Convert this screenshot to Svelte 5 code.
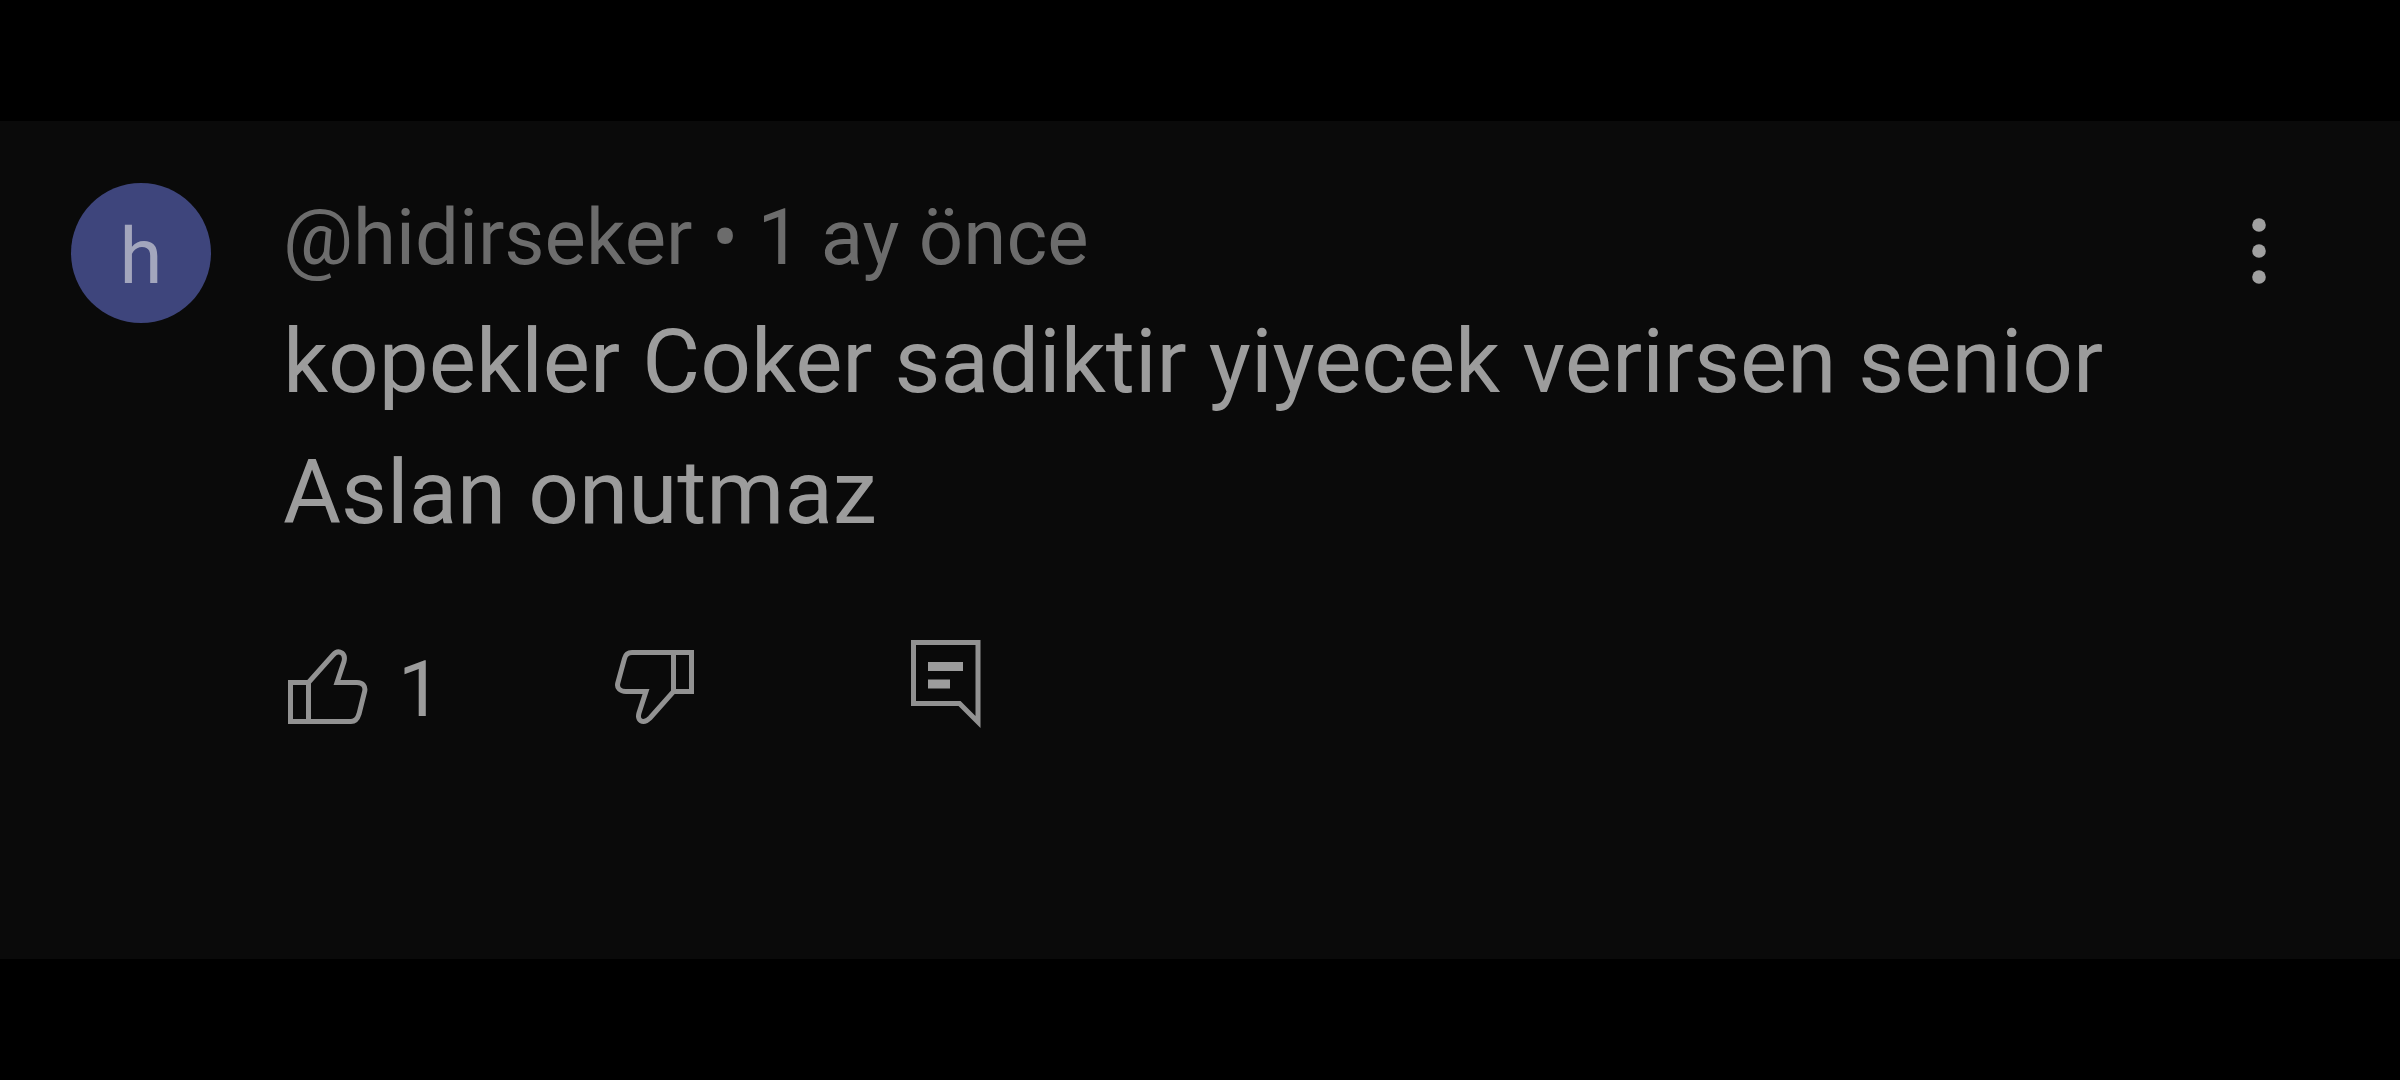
<script>
    let comment = {
        author: '@hidirseker',
        initial: 'h',
        age: '1 ay önce',
        text: 'kopekler Coker sadiktir yiyecek verirsen senior Aslan onutmaz',
    };
    let likes = 1;
</script>

<main class="page">
    <article class="comment">
        <a class="avatar" href="#channel">{comment.initial}</a>

        <div class="content">
            <header class="meta">
                <a class="author" href="#channel">{comment.author}</a> • {comment.age}
            </header>
            <p class="text">{comment.text}</p>

            <div class="actions">
                <button class="action" aria-label="Like">
                    <svg class="icon" viewBox="0 0 80 96">
                        <path d="M2.5 42.5H20.5L45 15C48 11.5 51 11 54 13C56.5 15 57 17.5 56 21.5L49 42.5H69C75 42.5 78 46.5 76.5 52L71 74C69.5 79 67 81.5 63 81.5H2.5ZM20.5 42.5V81.5" />
                    </svg>
                    <span class="count">{likes}</span>
                </button>
                <button class="action" aria-label="Dislike">
                    <svg class="icon" viewBox="0 0 80 96">
                        <path d="M76.5 12.5H17C13 12.5 10.5 14.5 9.5 18.5L2.8 43C1.5 48 5 51.5 11 51.5H31L24 73C22.5 78 24.5 81.5 28.5 81.5C31 81.5 33 80 35 78L58.5 51.5H76.5ZM58.5 12.5V51.5" />
                    </svg>
                </button>
                <button class="action" aria-label="Reply">
                    <svg class="icon" viewBox="0 0 80 96">
                        <path d="M2.5 2.5H67V82L48.5 63.5H2.5Z" />
                        <path class="solid" d="M17 22H52V31H17ZM17 39.5H39V48.5H17Z" />
                    </svg>
                </button>
            </div>
        </div>

        <button class="menu" aria-label="More actions">
            <svg viewBox="0 0 20 72">
                <circle cx="10" cy="10" r="6.8" />
                <circle cx="10" cy="36" r="6.8" />
                <circle cx="10" cy="62" r="6.8" />
            </svg>
        </button>
    </article>
</main>

<style>
    :global(body) {
        margin: 0;
        background: #000;
    }

    .page {
        box-sizing: border-box;
        min-height: 100vh;
        padding: 121px 0;
        display: flex;
        flex-direction: column;
        background: #000;
        color: #9c9c9c;
        font-family: Roboto, sans-serif;
    }

    .comment {
        flex: 1;
        display: flex;
        align-items: flex-start;
        padding: 62px 131px 60px 71px;
        background: #0a0a0a;
    }

    .avatar {
        flex: none;
        width: 140px;
        height: 140px;
        margin-right: 72px;
        border-radius: 50%;
        background: #3e457c;
        color: #a3a6bd;
        font-size: 78px;
        line-height: 148px;
        text-align: center;
        text-decoration: none;
    }

    .content {
        flex: 1;
        min-width: 0;
        padding-top: 9px;
    }

    .meta {
        color: #6c6c6c;
        font-size: 78px;
        line-height: 92px;
    }
    .author {
        color: inherit;
        text-decoration: none;
    }

    .text {
        margin: 12px 0 82px;
        font-size: 89px;
        line-height: 131px;
    }

    .actions {
        display: grid;
        grid-template-columns: 327px 296px auto;
        justify-content: start;
        padding-left: 5px;
    }

    .action,
    .menu {
        display: flex;
        padding: 0;
        border: none;
        background: none;
        color: inherit;
        font-family: inherit;
        cursor: pointer;
    }
    .action {
        align-items: flex-end;
        gap: 30px;
    }

    .icon {
        width: 80px;
        height: 96px;
        fill: none;
        stroke: #929292;
        stroke-width: 5;
    }
    .solid {
        fill: #9c9c9c;
        stroke: none;
    }

    .count {
        font-size: 78px;
        line-height: 92px;
    }

    .menu {
        flex: none;
        margin-top: 32px;
    }
    .menu svg {
        width: 20px;
        height: 72px;
        fill: #a0a0a0;
    }
</style>
